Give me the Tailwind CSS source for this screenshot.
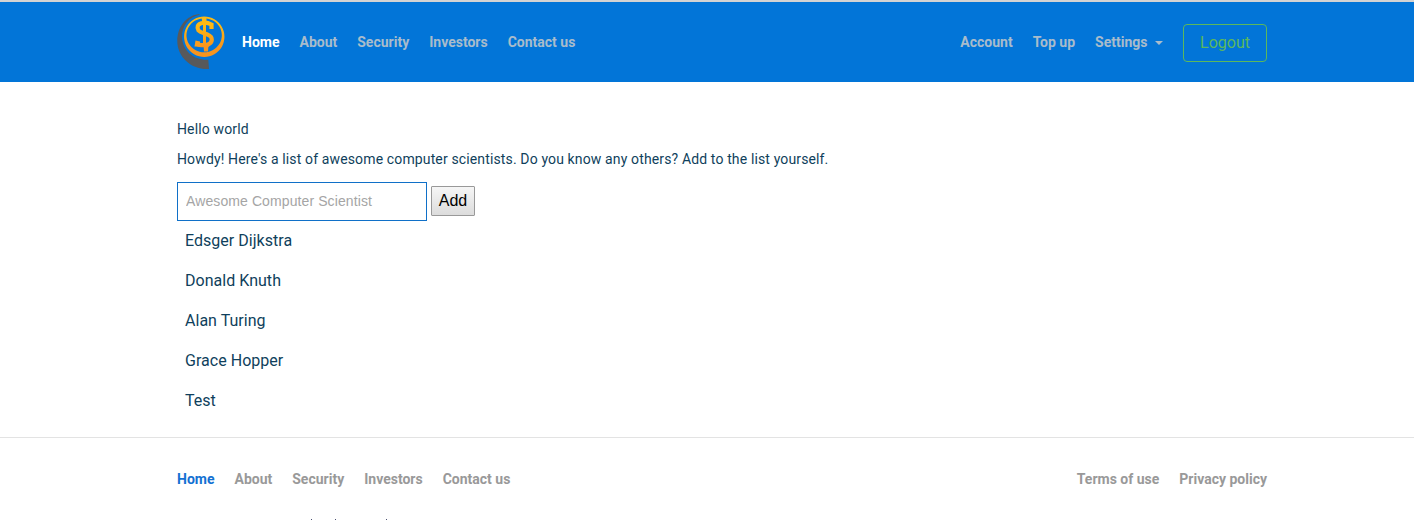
<!DOCTYPE html>
<html lang="en">
<head>
<meta charset="utf-8">
<title>Home</title>
<script src="https://cdn.jsdelivr.net/npm/@tailwindcss/browser@4"></script>
</head>
<body class="h-[520px] overflow-hidden bg-white font-[Roboto,sans-serif] text-[#0f3f5c]">
<header class="h-[82px] border-t-2 border-[#d3d3d3] bg-[#0275d8] pl-[177px] pr-[147px]">
  <div class="flex h-20 items-center">
    <svg class="h-[60px] w-[50px] shrink-0" viewBox="0 0 50 60" fill="none">
      <defs><linearGradient id="gold" x1="0" y1="5" x2="0" y2="45" gradientUnits="userSpaceOnUse"><stop offset=".2" stop-color="#fdb913"/><stop offset=".75" stop-color="#f7941e"/></linearGradient></defs>
      <path d="M22.500 2C9 3.500 .3 15 .3 29c0 16 14 29 31.700 28l-.7-9.300C17 48.500 5.500 39 5 25 4.700 14 12 5 22.500 2.800z" fill="#58595b"/>
      <path fill="#0275d8" d="M27.200 4.600a20.200 20.200 0 1 0 .1 0z"/>
      <path fill-rule="evenodd" d="M27.200 4.600a20.200 20.200 0 1 0 .1 0zM27.200 6.300a17.700 17 0 1 1-.1 0z" fill="url(#gold)"/>
      <path d="M24.500 5.500h5v6h-4zM26.500 33h5l-.5 6.500h-4z" fill="url(#gold)"/>
      <path d="M27.500 11v23" stroke="url(#gold)" stroke-width="3"/>
      <path d="M34.500 17V12.500C31 10.700 27 10.500 25 11C20.500 12 19.500 15.500 21.500 18.500C24 21.500 33 21.500 34.500 26C35.700 30 32.500 33 28 33.200C24.500 33.300 21.500 33 20 32" stroke="url(#gold)" stroke-width="4.200"/>
      <path d="M18.500 28.500l4.500 1 .5 5h-6z" fill="#f99d1c"/>
    </svg>
    <nav class="ml-[15px] flex gap-5 text-sm font-bold text-[#a9bccb]"><a class="text-white">Home</a><a>About</a><a>Security</a><a>Investors</a><a>Contact us</a></nav>
    <nav class="ml-auto flex items-center gap-5 text-sm font-bold text-[#a9bccb]"><a>Account</a><a>Top up</a><a class="flex items-center gap-[7.5px]">Settings <span class="mt-0.5 border-x-4 border-t-4 border-x-transparent"></span></a>
    <a class="mt-[2px] flex h-[38px] w-[84px] items-center justify-center rounded border border-[#5cb85c] text-base font-normal text-[#5cb85c]">Logout</a></nav>
  </div>
</header>
<main class="h-[355px] pl-[177px] pt-[37px]">
  <p class="text-sm tracking-[0.135px]">Hello world</p>
  <p class="mt-[10px] text-sm tracking-[0.135px]">Howdy! Here's a list of awesome computer scientists. Do you know any others? Add to the list yourself.</p>
  <form class="mt-[13px] flex h-[39px] items-start gap-1">
    <input class="h-[39px] w-[250px] border border-[#1070c8] px-2 pb-0.5 font-['Liberation_Sans',sans-serif] text-sm tracking-[0.1px] placeholder:text-[#a5a5a5]" placeholder="Awesome Computer Scientist">
    <button type="button" class="mt-1 h-[30px] w-11 rounded-[1px] border border-[#999] bg-linear-to-b from-[#f6f6f6] to-[#dcdcdc] font-['Liberation_Sans',sans-serif] text-base text-black">Add</button>
  </form>
  <ul class="pl-2 text-base leading-10 tracking-[0.03px]"><li>Edsger Dijkstra</li><li>Donald Knuth</li><li>Alan Turing</li><li>Grace Hopper</li><li>Test</li></ul>
</main>
<footer class="h-[83px] border-t border-[#e3e3e3] pl-[177px] pr-[147px] pt-[31px] text-[#999]">
  <div class="flex justify-between text-sm font-bold">
    <nav class="flex gap-5"><a class="text-[#1471d2]">Home</a><a>About</a><a>Security</a><a>Investors</a><a>Contact us</a></nav>
    <nav class="flex gap-5"><a>Terms of use</a><a>Privacy policy</a></nav>
  </div>
  <div class="mt-[30px] flex pl-[134px]"><i class="h-px w-px bg-[#4a5070]"></i><i class="ml-[23px] h-px w-px bg-[#4a5070]"></i><i class="ml-[50px] h-px w-px bg-[#4a5070]"></i></div>
</footer>
</body>
</html>
